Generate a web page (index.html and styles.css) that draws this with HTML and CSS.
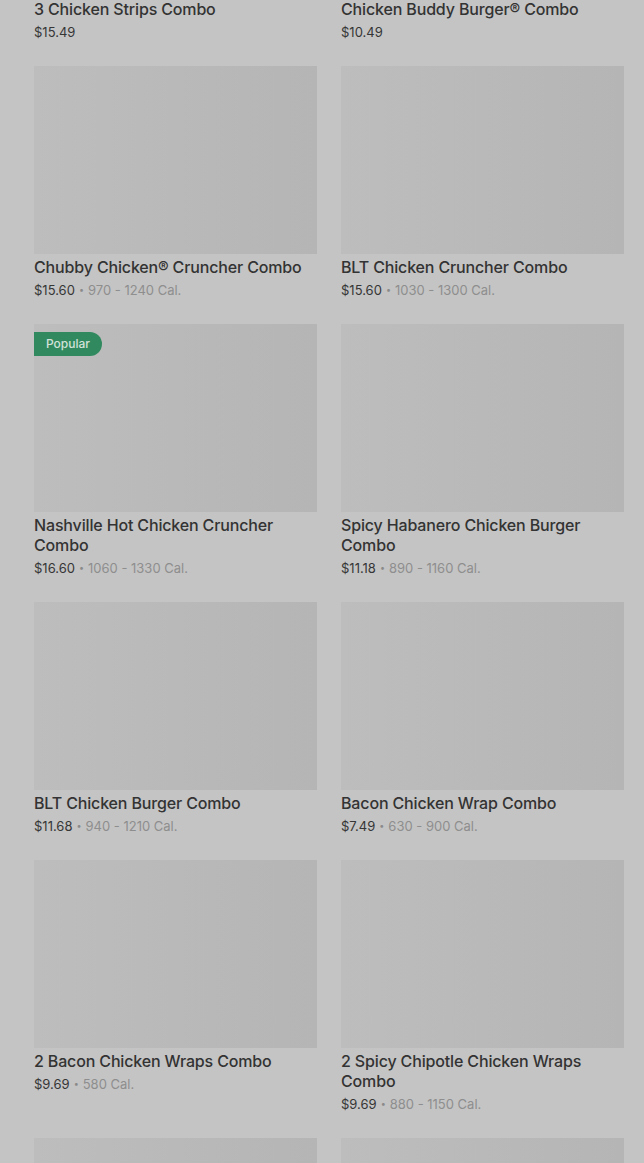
FILE: index.html
```html
<!DOCTYPE html>
<html>
<head>
<meta charset="utf-8">
<link rel="stylesheet" href="styles.css">
</head>
<body>
<div class="page">
  <div class="grid">
    <div class="card"><div class="thumb"></div><div class="title">3 Chicken Strips Combo</div><div class="meta"><span class="price">$15.49</span></div></div>
    <div class="card"><div class="thumb"></div><div class="title">Chicken Buddy Burger® Combo</div><div class="meta"><span class="price">$10.49</span></div></div>

    <div class="card"><div class="thumb"></div><div class="title">Chubby Chicken® Cruncher Combo</div><div class="meta"><span class="price">$15.60</span><span class="dot">•</span><span class="cal">970 - 1240 Cal.</span></div></div>
    <div class="card"><div class="thumb"></div><div class="title">BLT Chicken Cruncher Combo</div><div class="meta"><span class="price">$15.60</span><span class="dot">•</span><span class="cal">1030 - 1300 Cal.</span></div></div>

    <div class="card"><div class="thumb"><span class="badge">Popular</span></div><div class="title">Nashville Hot Chicken Cruncher Combo</div><div class="meta"><span class="price">$16.60</span><span class="dot">•</span><span class="cal">1060 - 1330 Cal.</span></div></div>
    <div class="card"><div class="thumb"></div><div class="title">Spicy Habanero Chicken Burger Combo</div><div class="meta"><span class="price">$11.18</span><span class="dot">•</span><span class="cal">890 - 1160 Cal.</span></div></div>

    <div class="card"><div class="thumb"></div><div class="title">BLT Chicken Burger Combo</div><div class="meta"><span class="price">$11.68</span><span class="dot">•</span><span class="cal">940 - 1210 Cal.</span></div></div>
    <div class="card"><div class="thumb"></div><div class="title">Bacon Chicken Wrap Combo</div><div class="meta"><span class="price">$7.49</span><span class="dot">•</span><span class="cal">630 - 900 Cal.</span></div></div>

    <div class="card"><div class="thumb"></div><div class="title">2 Bacon Chicken Wraps Combo</div><div class="meta"><span class="price">$9.69</span><span class="dot">•</span><span class="cal">580 Cal.</span></div></div>
    <div class="card"><div class="thumb"></div><div class="title">2 Spicy Chipotle Chicken Wraps Combo</div><div class="meta"><span class="price">$9.69</span><span class="dot">•</span><span class="cal">880 - 1150 Cal.</span></div></div>

    <div class="card"><div class="thumb"></div></div>
    <div class="card"><div class="thumb"></div></div>
  </div>
</div>
</body>
</html>
```

FILE: styles.css
```css
html, body {
  margin: 0;
  padding: 0;
  background: #c4c4c4;
  height: 1163px;
  overflow: hidden;
}
body {
  font-family: Inter, "Noto Sans", "Liberation Sans", sans-serif;
  color: #2e2e2e;
}
.page {
  padding: 0 20px 0 34px;
}
.grid {
  display: grid;
  grid-template-columns: 283px 283px;
  column-gap: 24px;
  row-gap: 25px;
  margin-top: -192px;
}
.card {
  display: flex;
  flex-direction: column;
}
.thumb {
  position: relative;
  height: 188px;
  background: linear-gradient(90deg, #bdbdbd 0%, #b9b9b9 50%, #b5b5b5 100%);
  margin-bottom: 3px;
}
.badge {
  position: absolute;
  left: 0;
  top: 8px;
  height: 24px;
  line-height: 24px;
  padding: 0 12px;
  background: #318a5f;
  color: #d2e2d9;
  font-size: 12px;
  font-weight: 500;
  border-radius: 0 12px 12px 0;
}
.title {
  font-size: 16px;
  line-height: 20px;
  font-weight: 500;
  letter-spacing: -0.15px;
  color: #333333;
}
.meta {
  margin-top: 4px;
  font-size: 13px;
  line-height: 18px;
  display: flex;
  align-items: center;
}
.price {
  color: #363636;
}
.dot {
  color: #8a8a8a;
  font-size: 9px;
  margin: 0 4px;
}
.cal {
  color: #8e8e8e;
}
```
